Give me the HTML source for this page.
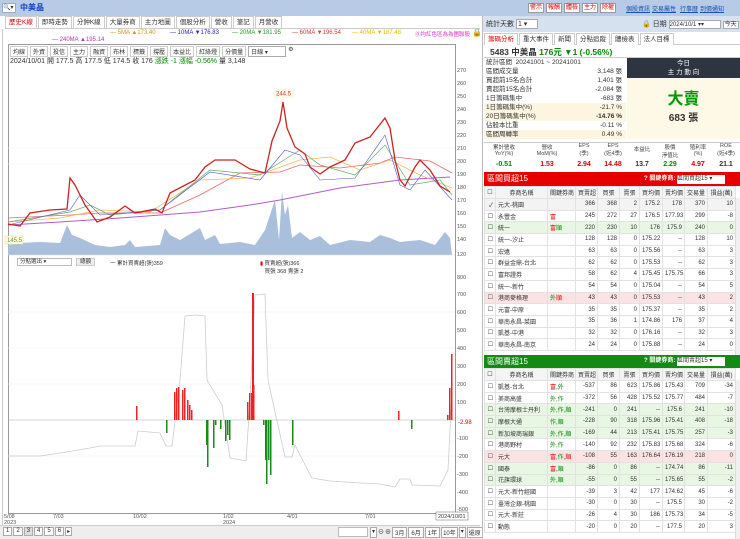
<!DOCTYPE html>
<html><head><meta charset="utf-8"><style>
*{box-sizing:border-box;margin:0;padding:0}
body{width:740px;height:539px;overflow:hidden;background:#fff;font-family:"Liberation Sans","Noto Sans CJK TC",sans-serif;font-size:7px;color:#333;position:relative}
.abs{position:absolute}
.top{left:0;top:0;width:740px;height:16px;background:#b7cbe6}
.btn{position:absolute;top:3px;height:10px;border:1px solid #999;background:#fff;color:#d00;font-size:6px;line-height:8px;text-align:center}
.lnk{position:absolute;top:4px;color:#1a4fb0;text-decoration:underline;font-size:6px}
.tabs span{display:inline-block;border:1px solid #ccc;border-bottom:none;padding:0 3px;height:12px;line-height:11px;font-size:6.5px;margin-right:1px;background:#fff}
table{border-collapse:collapse;table-layout:fixed}
td{border:1px solid #e2e2e2;font-size:6px;height:11.7px;padding:0 2px;text-align:right;white-space:nowrap;overflow:hidden}
td.l{text-align:left}
.hd td{background:#f4f4f4;text-align:center;height:12px}
.rt{color:#d00}.gt{color:#080}
.st div{height:9px;line-height:9px;font-size:6.5px;position:relative;padding-left:2px}
.st span{position:absolute;right:4px}
</style></head><body>
<div class="abs top">
 <div class="abs" style="left:2px;top:3px;width:14px;height:10px;background:#fff;border:1px solid #aaa;font-size:6px;line-height:8px">🔍▾</div>
 <div class="abs" style="left:20px;top:2px;color:#1545c8;font-weight:bold;font-size:8px">中美晶</div>
 <div class="btn" style="left:528px;width:16px">警示</div>
 <div class="btn" style="left:546px;width:16px">報酬</div>
 <div class="btn" style="left:564px;width:16px">體檢</div>
 <div class="btn" style="left:582px;width:16px">主力</div>
 <div class="btn" style="left:600px;width:16px">除權</div>
 <div class="lnk" style="left:626px">個股資訊</div>
 <div class="lnk" style="left:652px">交易屬性</div>
 <div class="lnk" style="left:680px">行事曆</div>
 <div class="lnk" style="left:700px">到價通知</div>
</div>
<!-- left tabs -->
<div class="abs tabs" style="left:5px;top:16px;width:475px;height:13px;border-bottom:1px solid #ccc">
<span style="color:#d00">歷史K線</span><span>即時走勢</span><span>分鈡K線</span><span>大量券商</span><span>主力地圖</span><span>個股分析</span><span>營收</span><span>筆記</span><span>月營收</span></div>
<div class="abs" style="left:0;top:29px;width:3px;height:510px;border-right:1px solid #ccc"></div>
<div class="abs" style="left:110px;top:30px;font-size:6px;color:#c90">— 5MA ▲173.40</div>
<div class="abs" style="left:170px;top:30px;font-size:6px;color:#22c">— 10MA ▼176.83</div>
<div class="abs" style="left:232px;top:30px;font-size:6px;color:#292">— 20MA ▼181.95</div>
<div class="abs" style="left:292px;top:30px;font-size:6px;color:#d33">— 60MA ▼196.54</div>
<div class="abs" style="left:352px;top:30px;font-size:6px;color:#eb0">— 40MA ▼187.48</div>
<div class="abs" style="left:415px;top:30px;font-size:5.5px;color:#d3c">⓪均紅色區為為團聯股</div>
<div class="abs" style="left:472px;top:28px;font-size:8px">🔒</div>
<div class="abs" style="left:52px;top:37px;font-size:6px;color:#b3a">— 240MA ▲195.14</div>
<div class="abs" style="left:8px;top:44px;width:448px;height:470px;border:1px solid #999"></div>
<div class="abs" style="left:10px;top:46px;font-size:6px;display:flex;gap:2px">
<span style="border:1px solid #ccc;padding:0 2px">均線</span><span style="border:1px solid #ccc;padding:0 2px">外資</span><span style="border:1px solid #ccc;padding:0 2px">投信</span><span style="border:1px solid #ccc;padding:0 2px">主力</span><span style="border:1px solid #ccc;padding:0 2px">融資</span><span style="border:1px solid #ccc;padding:0 2px">布林</span><span style="border:1px solid #ccc;padding:0 2px">標籤</span><span style="border:1px solid #ccc;padding:0 2px">撐壓</span><span style="border:1px solid #ccc;padding:0 2px">本益比</span><span style="border:1px solid #ccc;padding:0 2px">紅綠燈</span><span style="border:1px solid #ccc;padding:0 2px">分價量</span><span style="border:1px solid #aaa;padding:0 2px;width:38px">日線 ▾</span><span>⚙</span></div>
<div class="abs" style="left:10px;top:56px;font-size:7px">2024/10/01 開 177.5 高 177.5 低 174.5 收 176 <span class="gt">漲跌 -1 漲幅 -0.56%</span> 量 3,148</div>
<svg class="abs" style="left:0;top:0" width="480" height="539">
<g font-size="5.5" fill="#555" font-family="Liberation Sans">
<text x="457" y="72">270</text><text x="457" y="85">260</text><text x="457" y="98">250</text><text x="457" y="111">240</text><text x="457" y="124">230</text><text x="457" y="137">220</text><text x="457" y="150">210</text><text x="457" y="163">200</text><text x="457" y="176">190</text><text x="457" y="189">180</text><text x="457" y="202">170</text><text x="457" y="215">160</text><text x="457" y="228">150</text><text x="457" y="241">140</text><text x="457" y="256">120</text>
<text x="457" y="279">800</text><text x="457" y="296">700</text><text x="457" y="314">600</text><text x="457" y="332">500</text><text x="457" y="350">400</text><text x="457" y="368">300</text><text x="457" y="386">200</text><text x="457" y="404">100</text><text x="457" y="440">-100</text><text x="457" y="458">-200</text><text x="457" y="476">-300</text><text x="457" y="494">-400</text><text x="457" y="511">-500</text>
<text x="458" y="424" fill="#d00" font-size="6">-2.98</text>
<text x="4" y="518">5/08</text><text x="4" y="524">2023</text><text x="53" y="518">7/03</text><text x="133" y="518">10/02</text><text x="223" y="518">1/02</text><text x="223" y="524">2024</text><text x="287" y="518">4/01</text><text x="365" y="518">7/01</text>
</g>
<rect x="436" y="512" width="32" height="8" fill="#fff" stroke="#666" stroke-width=".5"/><text x="438" y="518" font-size="5.5" fill="#333">2024/10/01</text>
<g stroke="#eee" stroke-width=".5"><line x1="8" x2="455" y1="148" y2="148"/><line x1="8" x2="455" y1="164" y2="164"/><line x1="8" x2="455" y1="312" y2="312"/><line x1="8" x2="455" y1="348" y2="348"/><line x1="8" x2="455" y1="384" y2="384"/><line x1="8" x2="455" y1="456" y2="456"/></g>
<polygon fill="#a9bfdc" points="8,255 8,245 20,243 40,242 60,243 67,225 72,235 80,238 95,245 110,247 125,245 130,240 135,247 160,245 165,228 170,235 180,240 200,228 205,240 215,235 220,244 240,242 255,245 265,230 270,215 275,200 279,240 282,192 285,215 288,205 292,238 300,232 310,240 320,236 330,245 350,240 370,242 380,235 390,238 400,242 420,240 435,245 445,232 450,238 452,255"/>
<g stroke="#ddd" stroke-width=".5"><line x1="8" x2="455" y1="255" y2="255"/></g>
<polyline fill="none" stroke="#b45cc8" stroke-width="1" points="8,225 60,222 120,218 200,212 250,205 280,200 340,188 400,180 450,177"/>
<polyline fill="none" stroke="#e66" stroke-width=".8" points="8,218 70,215 100,213 160,213 200,195 240,173 280,172 300,165 340,168 380,163 395,157 430,161 452,173"/>
<polyline fill="none" stroke="#eb5" stroke-width=".8" points="8,222 60,218 100,210 150,212 200,180 250,178 300,160 330,157 360,170 390,160 420,175 452,188"/>
<polyline fill="none" stroke="#6a6" stroke-width=".7" points="8,222 70,212 90,205 110,215 160,210 210,170 260,175 300,150 320,165 355,175 385,145 410,185 440,180 452,195"/>
<polyline fill="none" stroke="#55c" stroke-width=".6" points="8,225 70,210 80,195 100,215 160,210 210,172 260,180 285,150 300,155 320,180 355,178 385,135 400,185 410,190 425,170 452,200"/>
<polyline fill="none" stroke="#c22" stroke-width="1.3" points="8,224 20,226 30,213 50,210 67,209 70,178 75,185 85,205 97,222 110,217 125,206 135,213 155,209 162,213 170,193 195,180 205,167 215,160 235,160 250,169 265,173 272,141 280,121 283,102 287,128 295,147 305,154 310,167 320,174 330,167 345,160 355,143 370,137 385,118 390,128 395,160 400,180 405,186 415,167 420,160 430,170 440,186 450,192"/>
<rect x="274" y="89" width="20" height="8" fill="#fffbe6" stroke="#eed" stroke-width=".5"/><text x="276" y="95.5" font-size="6" fill="#d33">244.5</text>
<rect x="5" y="236" width="18" height="8" fill="#fffde0" stroke="#dd9" stroke-width=".5"/><text x="7" y="242" font-size="6" fill="#693">145.5</text>
<g>
<rect x="8" y="263" width="16" height="0" />
</g>
<line x1="8" x2="455" y1="420" y2="420" stroke="#aaa" stroke-width=".6"/>
<polyline fill="none" stroke="#ccc" stroke-width=".8" points="8,456 40,456 60,453 90,448 100,446 135,446 138,431 160,433 166,446 172,446 180,380 185,316 195,315 205,316 207,380 222,405 230,458 246,461 250,400 255,295 265,294 268,380 285,457 292,457 295,445 300,455 312,478 330,481 360,483 380,484 395,487 400,479 410,479 412,485 440,486 448,470 452,390"/>
<g fill="#e22">
<rect x="136" y="406" width="1.5" height="14"/><rect x="174" y="392" width="1.5" height="28"/><rect x="176" y="388" width="1.5" height="32"/><rect x="178" y="387" width="1.5" height="33"/><rect x="182" y="390" width="1.5" height="30"/><rect x="184" y="388" width="1.5" height="32"/><rect x="187" y="400" width="1.5" height="20"/><rect x="189" y="405" width="1.5" height="15"/><rect x="191" y="410" width="1.5" height="10"/>
<rect x="247" y="402" width="1.5" height="18"/><rect x="249" y="393" width="1.5" height="27"/><rect x="251" y="393" width="1.5" height="27"/><rect x="253" y="385" width="1.5" height="35"/><rect x="252" y="293" width="2" height="127"/>
<rect x="398" y="411" width="1.5" height="9"/><rect x="449" y="388" width="1.5" height="32"/><rect x="451" y="354" width="1.5" height="66"/><rect x="447" y="415" width="1.5" height="5"/>
</g>
<g fill="#1a8a1a">
<rect x="166" y="420" width="1.5" height="13"/><rect x="206" y="420" width="1.5" height="25"/><rect x="207" y="420" width="1.5" height="47"/><rect x="213" y="420" width="1.5" height="28"/><rect x="215" y="420" width="1.5" height="5"/><rect x="220" y="420" width="1.5" height="9"/><rect x="225" y="420" width="1.5" height="21"/><rect x="227" y="420" width="1.5" height="15"/><rect x="229" y="420" width="1.5" height="20"/>
<rect x="263" y="420" width="1.5" height="5"/><rect x="265" y="420" width="1.5" height="40"/><rect x="266" y="420" width="1.5" height="64"/><rect x="268" y="420" width="1.5" height="40"/><rect x="270" y="420" width="1.5" height="55"/><rect x="292" y="420" width="1.5" height="25"/><rect x="411" y="420" width="1.5" height="9"/>
</g>
</svg>
<div class="abs" style="left:17px;top:258px;width:55px;height:8px;border:1px solid #bbb;font-size:5.5px;line-height:6px;padding-left:2px;background:#fff">分點選出 ▾</div>
<div class="abs" style="left:76px;top:258px;width:19px;height:8px;border:1px solid #ccc;background:#eee;font-size:5.5px;line-height:6px;text-align:center">總額</div>
<div class="abs" style="left:110px;top:259px;font-size:5.5px">一 累計買賣超(張)359</div>
<div class="abs" style="left:260px;top:259px;font-size:5.5px"><span style="color:#d00">▮</span> 買賣超(張)366<br>&nbsp;&nbsp;&nbsp;買張 368 賣張 2</div>
<div class="abs" style="left:0;top:525px;width:480px;height:14px;background:#eee;border-top:1px solid #ccc"></div>
<div class="abs" style="left:3px;top:527px;font-size:6px;display:flex;gap:1px"><span style="border:1px solid #aaa;background:#fff;padding:0 2px">1</span><span style="border:1px solid #aaa;background:#fff;padding:0 2px">2</span><span style="border:1px solid #aaa;background:#ddd;padding:0 2px">3</span><span style="border:1px solid #aaa;background:#fff;padding:0 2px">4</span><span style="border:1px solid #aaa;background:#fff;padding:0 2px">5</span><span style="border:1px solid #aaa;background:#fff;padding:0 2px">6</span><span style="border:1px solid #aaa;background:#fff;padding:0 1px">▸</span></div>
<div class="abs" style="left:338px;top:527px;width:30px;height:10px;border:1px solid #bbb;background:#fff"></div>
<div class="abs" style="left:370px;top:527px;font-size:6px;display:flex;gap:1px"><span style="border:1px solid #aaa;background:#fff;padding:0 1px">▾</span><span>⊖</span><span>⊕</span><span style="border:1px solid #aaa;background:#fff;padding:0 2px">3月</span><span style="border:1px solid #aaa;background:#fff;padding:0 2px">6月</span><span style="border:1px solid #aaa;background:#fff;padding:0 2px">1年</span><span style="border:1px solid #aaa;background:#fff;padding:0 1px">10年</span><span style="border:1px solid #aaa;background:#fff;padding:0 1px">▾</span><span style="border:1px solid #aaa;background:#fff;padding:0 1px">還原</span></div>

<!-- RIGHT PANEL -->
<div class="abs" style="left:482px;top:16px;width:258px;height:523px;background:#fff;border-left:1px solid #bbb"></div>
<div class="abs" style="left:483px;top:16px;width:257px;height:16px;background:#d6e1ef"></div>
<div class="abs" style="left:486px;top:19px;font-size:7px">統計天數 <span style="display:inline-block;border:1px solid #aaa;background:#fff;width:22px;padding-left:1px">1 ▾</span></div>
<div class="abs" style="left:642px;top:19px;font-size:7px">🔒 日期 <span style="display:inline-block;border:1px solid #aaa;background:#fff;width:52px;font-size:6px">2024/10/1 ▾▾</span> <span style="border:1px solid #aaa;background:#fff;font-size:6px;padding:0 1px">今天</span></div>
<div class="abs tabs" style="left:484px;top:33px;width:256px;height:12px;border-bottom:1px solid #ccc"><span style="color:#d00">籌碼分析</span><span>重大事件</span><span>新聞</span><span>分點追蹤</span><span>體檢表</span><span>法人目標</span></div>
<div class="abs" style="left:490px;top:46px;font-size:8.5px;font-weight:bold">5483 中美晶 <span class="gt">176元 ▼1 (-0.56%)</span></div>
<div class="abs" style="left:484px;top:57px;width:256px;border-top:1px solid #ccc"></div>
<div class="abs st" style="left:484px;top:58px;width:142px">
<div>統計區間 &nbsp;20241001 ~ 20241001</div>
<div>區間成交量<span>3,148 張</span></div>
<div>買超前15名合計<span>1,401 張</span></div>
<div>賣超前15名合計<span>-2,084 張</span></div>
<div>1日籌碼集中<span>-683 張</span></div>
<div style="background:#fdf5e0">1日籌碼集中(%)<span>-21.7 %</span></div>
<div style="background:#fdf5e0">20日籌碼集中(%)<span style="font-weight:bold">-14.76 %</span></div>
<div>佔股本比重<span>-0.11 %</span></div>
<div style="background:#fdf5e0">區間周轉率<span>0.49 %</span></div>
</div>
<div class="abs" style="left:627px;top:58px;width:113px;height:20px;background:#2d3540;color:#fff;font-size:6.5px;text-align:center;line-height:9px;padding-top:1px">今日<br>主 力 動 向</div>
<div class="abs" style="left:627px;top:78px;width:113px;height:61px;background:#fdf9e6;text-align:center"><div style="color:#090;font-size:16px;font-weight:bold;margin-top:7px">大賣</div><div style="font-size:10px;font-weight:bold">683 張</div></div>
<div class="abs" style="left:484px;top:142px;width:256px;border-top:1px solid #ccc"></div>
<div class="abs" style="left:484px;top:143px;width:256px;display:flex;font-size:5.5px;text-align:center;color:#444">
<div style="width:40px">累計營收<br>YoY(%)</div><div style="width:46px">營收<br>MoM(%)</div><div style="width:28px">EPS<br>(季)</div><div style="width:30px">EPS<br>(近4季)</div><div style="width:28px;line-height:14px">本益比</div><div style="width:28px">股價<br>淨值比</div><div style="width:28px">殖利率<br>(%)</div><div style="width:28px">ROE<br>(近4季)</div></div>
<div class="abs" style="left:484px;top:161px;width:256px;display:flex;font-size:7px;text-align:center;font-weight:bold">
<div style="width:40px" class="gt">-0.51</div><div style="width:46px" class="rt">1.53</div><div style="width:28px" class="rt">2.94</div><div style="width:30px" class="rt">14.48</div><div style="width:28px">13.7</div><div style="width:28px" class="gt">2.29</div><div style="width:28px" class="rt">4.97</div><div style="width:28px">21.1</div></div>
<!-- red table -->
<div class="abs" style="left:484px;top:172px;width:256px;height:14px;background:#e60000;color:#fff;font-size:8px;line-height:14px;padding-left:3px">區間買超15<span style="position:absolute;left:160px;font-size:6px;font-weight:bold">? 關鍵券商: <span style="display:inline-block;background:#fff;color:#333;width:48px;height:9px;line-height:9px;font-weight:normal">區間買超15 ▾</span></span></div>
<table class="abs" style="left:484px;top:186px;width:251px">
<colgroup><col style="width:11px"><col style="width:52px"><col style="width:28px"><col style="width:22px"><col style="width:22px"><col style="width:20px"><col style="width:23px"><col style="width:22px"><col style="width:23px"><col style="width:28px"></colgroup>
<tr class="hd"><td>☐</td><td>券商名稱</td><td>關鍵券商</td><td>買賣超</td><td>買張</td><td>賣張</td><td>買均價</td><td>賣均價</td><td>交易量</td><td>損益(萬)</td></tr>
<tr style="background:#f3f3f3"><td>✓</td><td class="l">元大-桃園</td><td></td><td>366</td><td>368</td><td>2</td><td>175.2</td><td>178</td><td>370</td><td>10</td></tr>
<tr><td>☐</td><td class="l">永豐金</td><td class="l rt">富</td><td>245</td><td>272</td><td>27</td><td>176.5</td><td>177.93</td><td>299</td><td>-8</td></tr>
<tr style="background:#e8f6e4"><td>☐</td><td class="l">統一</td><td class="l rt">富<span class="gt">順</span></td><td>220</td><td>230</td><td>10</td><td>176</td><td>175.9</td><td>240</td><td>0</td></tr>
<tr><td>☐</td><td class="l">統一-汐止</td><td></td><td>128</td><td>128</td><td>0</td><td>175.22</td><td>--</td><td>128</td><td>10</td></tr>
<tr><td>☐</td><td class="l">宏遠</td><td></td><td>63</td><td>63</td><td>0</td><td>175.56</td><td>--</td><td>63</td><td>3</td></tr>
<tr><td>☐</td><td class="l">群益金鼎-台北</td><td></td><td>62</td><td>62</td><td>0</td><td>175.53</td><td>--</td><td>62</td><td>3</td></tr>
<tr><td>☐</td><td class="l">富邦證券</td><td></td><td>58</td><td>62</td><td>4</td><td>175.45</td><td>175.75</td><td>66</td><td>3</td></tr>
<tr><td>☐</td><td class="l">統一-新竹</td><td></td><td>54</td><td>54</td><td>0</td><td>175.04</td><td>--</td><td>54</td><td>5</td></tr>
<tr style="background:#fbe3e3"><td>☐</td><td class="l">港商麥格理</td><td class="l gt">外<span class="rt">順</span></td><td>43</td><td>43</td><td>0</td><td>175.53</td><td>--</td><td>43</td><td>2</td></tr>
<tr><td>☐</td><td class="l">元富-中原</td><td></td><td>35</td><td>35</td><td>0</td><td>175.37</td><td>--</td><td>35</td><td>2</td></tr>
<tr><td>☐</td><td class="l">華南永昌-菜園</td><td></td><td>35</td><td>36</td><td>1</td><td>174.86</td><td>176</td><td>37</td><td>4</td></tr>
<tr><td>☐</td><td class="l">凱基-中港</td><td></td><td>32</td><td>32</td><td>0</td><td>176.16</td><td>--</td><td>32</td><td>3</td></tr>
<tr><td>☐</td><td class="l">華南永昌-南京</td><td></td><td>24</td><td>24</td><td>0</td><td>175.88</td><td>--</td><td>24</td><td>0</td></tr>
</table>
<!-- green table -->
<div class="abs" style="left:484px;top:355px;width:256px;height:13px;background:#138a13;color:#fff;font-size:8px;line-height:13px;padding-left:3px">區間賣超15<span style="position:absolute;left:160px;font-size:6px;font-weight:bold">? 關鍵券商: <span style="display:inline-block;background:#fff;color:#333;width:48px;height:9px;line-height:9px;font-weight:normal">區間賣超15 ▾</span></span></div>
<table class="abs" style="left:484px;top:368px;width:251px">
<colgroup><col style="width:11px"><col style="width:52px"><col style="width:28px"><col style="width:22px"><col style="width:22px"><col style="width:20px"><col style="width:23px"><col style="width:22px"><col style="width:23px"><col style="width:28px"></colgroup>
<tr class="hd"><td>☐</td><td>券商名稱</td><td>關鍵券商</td><td>買賣超</td><td>買張</td><td>賣張</td><td>買均價</td><td>賣均價</td><td>交易量</td><td>損益(萬)</td></tr>
<tr><td>☐</td><td class="l">凱基-台北</td><td class="l rt">富<span class="gt">,外</span></td><td>-537</td><td>86</td><td>623</td><td>175.86</td><td>175.43</td><td>709</td><td>-34</td></tr>
<tr><td>☐</td><td class="l">美商高盛</td><td class="l gt">外,作</td><td>-372</td><td>56</td><td>428</td><td>175.52</td><td>175.77</td><td>484</td><td>-7</td></tr>
<tr style="background:#e8f6e4"><td>☐</td><td class="l">台灣摩根士丹利</td><td class="l gt">外,作,順</td><td>-241</td><td>0</td><td>241</td><td>--</td><td>175.6</td><td>241</td><td>-10</td></tr>
<tr style="background:#e8f6e4"><td>☐</td><td class="l">摩根大通</td><td class="l gt">作,順</td><td>-228</td><td>90</td><td>318</td><td>175.96</td><td>175.41</td><td>408</td><td>-18</td></tr>
<tr style="background:#e8f6e4"><td>☐</td><td class="l">新加坡商瑞銀</td><td class="l gt">外,作,順</td><td>-169</td><td>44</td><td>213</td><td>175.41</td><td>175.75</td><td>257</td><td>-3</td></tr>
<tr><td>☐</td><td class="l">港商野村</td><td class="l gt">外,作</td><td>-140</td><td>92</td><td>232</td><td>175.83</td><td>175.68</td><td>324</td><td>-6</td></tr>
<tr style="background:#fbe3e3"><td>☐</td><td class="l">元大</td><td class="l rt">富,<span class="gt">作,</span>順</td><td>-108</td><td>55</td><td>163</td><td>176.64</td><td>176.19</td><td>218</td><td>0</td></tr>
<tr style="background:#e8f6e4"><td>☐</td><td class="l">國泰</td><td class="l rt">富,<span class="gt">順</span></td><td>-86</td><td>0</td><td>86</td><td>--</td><td>174.74</td><td>86</td><td>-11</td></tr>
<tr style="background:#e8f6e4"><td>☐</td><td class="l">花旗環球</td><td class="l gt">外,順</td><td>-55</td><td>0</td><td>55</td><td>--</td><td>175.65</td><td>55</td><td>-2</td></tr>
<tr><td>☐</td><td class="l">元大-新竹經國</td><td></td><td>-39</td><td>3</td><td>42</td><td>177</td><td>174.62</td><td>45</td><td>-6</td></tr>
<tr><td>☐</td><td class="l">臺灣企銀-桃園</td><td></td><td>-30</td><td>0</td><td>30</td><td>--</td><td>175.5</td><td>30</td><td>-2</td></tr>
<tr><td>☐</td><td class="l">元大-新莊</td><td></td><td>-26</td><td>4</td><td>30</td><td>186</td><td>175.73</td><td>34</td><td>-5</td></tr>
<tr><td>☐</td><td class="l">動態</td><td></td><td>-20</td><td>0</td><td>20</td><td>--</td><td>177.5</td><td>20</td><td>3</td></tr>
</table>
<div class="abs" style="left:735px;top:198px;width:5px;height:157px;background:#f0f0f0;border-left:1px solid #ddd"></div>
<div class="abs" style="left:735px;top:380px;width:5px;height:159px;background:#f0f0f0;border-left:1px solid #ddd"></div>
</body></html>
